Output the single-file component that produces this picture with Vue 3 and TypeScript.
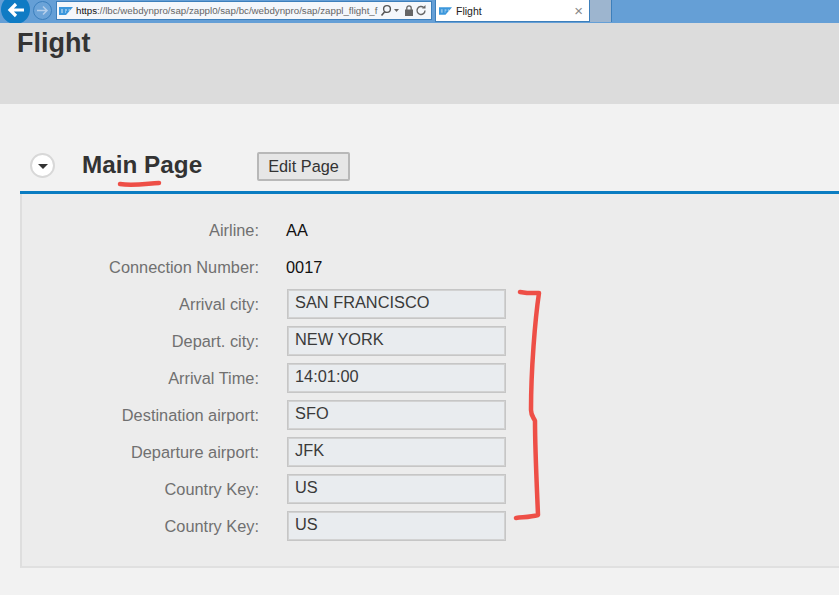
<script setup lang="ts">
interface Row { label: string; value: string; input: boolean }
const rows: Row[] = [
  { label: 'Airline:', value: 'AA', input: false },
  { label: 'Connection Number:', value: '0017', input: false },
  { label: 'Arrival city:', value: 'SAN FRANCISCO', input: true },
  { label: 'Depart. city:', value: 'NEW YORK', input: true },
  { label: 'Arrival Time:', value: '14:01:00', input: true },
  { label: 'Destination airport:', value: 'SFO', input: true },
  { label: 'Departure airport:', value: 'JFK', input: true },
  { label: 'Country Key:', value: 'US', input: true },
  { label: 'Country Key:', value: 'US', input: true },
]
</script>

<template>
  <div class="page">
    <div class="chrome">
      <div class="back">
        <svg width="20" height="18" viewBox="0 0 20 18"><path d="M18 9H4M10 3L4 9l6 6" fill="none" stroke="#fff" stroke-width="3.200"/></svg>
      </div>
      <div class="forward">
        <svg width="13" height="13" viewBox="0 0 13 13"><path d="M1 6.500h10M7 2.500l4 4-4 4" fill="none" stroke="#b5cfeb" stroke-width="1.500"/></svg>
      </div>
      <div class="address">
        <svg class="sap" width="14" height="8" viewBox="0 0 14 8">
          <path d="M0 0h14L7 8H0z" fill="#3b97dc"/>
          <path d="M2 3h2M2 5h2M6 3h2M6 5h1M9.500 3h1.500" stroke="#fff" stroke-width="0.800"/>
        </svg>
        <span class="url"><b>https</b>://lbc/webdynpro/sap/zappl0/sap/bc/webdynpro/sap/zappl_flight_f</span>
        <svg class="tool" width="48" height="13" viewBox="0 0 48 13">
          <circle cx="7" cy="5" r="3.400" fill="none" stroke="#555" stroke-width="1.400"/>
          <path d="M4.500 8L1.500 11.500" stroke="#555" stroke-width="1.600"/>
          <path d="M14 5h5l-2.500 3z" fill="#666"/>
          <rect x="25" y="5.500" width="8" height="6.500" fill="#666"/>
          <path d="M26.800 6V4a2.200 2.200 0 0 1 4.400 0v2" fill="none" stroke="#666" stroke-width="1.300"/>
          <path d="M45 6.500a4 4 0 1 1-1.300-3" fill="none" stroke="#666" stroke-width="1.400"/>
          <path d="M45.500 1v3.500H42z" fill="#666"/>
        </svg>
      </div>
      <div class="tab">
        <svg width="13" height="8" viewBox="0 0 14 8">
          <path d="M0 0h14L7 8H0z" fill="#3b97dc"/>
          <path d="M2 3h2M2 5h2M6 3h2M6 5h1M9.500 3h1.500" stroke="#fff" stroke-width="0.800"/>
        </svg>
        <span class="tabtitle">Flight</span>
        <span class="close">×</span>
      </div>
      <div class="newtab"></div>
    </div>

    <header class="head"><h1>Flight</h1></header>

    <main class="body">
      <div class="titlebar">
        <div class="toggle"><span class="arrow"></span></div>
        <h2>Main Page</h2>
        <button class="edit">Edit Page</button>
      </div>
      <section class="panel">
        <div v-for="(r, i) in rows" :key="i" class="row">
          <label>{{ r.label }}</label>
          <div v-if="r.input" class="field">{{ r.value }}</div>
          <div v-else class="plain">{{ r.value }}</div>
        </div>
      </section>
    </main>

    <svg class="ink" width="839" height="595" viewBox="0 0 839 595">
      <path d="M120 184c12 2 24 0 39-1" />
      <path d="M520 292L527 293L539 293C535 320 531 370 531 410C531 416 534 418 535 421C535 450 537 490 538 515C531 517 525 517 516 518" />
    </svg>
  </div>
</template>

<style>
html, body { margin: 0; padding: 0; background: #f2f2f2; }
</style>

<style scoped>
.page {
  position: relative;
  width: 839px;
  height: 595px;
  overflow: hidden;
  font-family: "Liberation Sans", Arial, sans-serif;
  background: #f2f2f2;
}
.chrome {
  height: 23px;
  overflow: hidden;
  background: #659fd6;
  display: flex;
  align-items: flex-start;
  box-sizing: border-box;
}
.back {
  width: 29px;
  height: 29px;
  margin: -5px 0 0 1px;
  background: #0f7bc4;
  border-radius: 50%;
  display: flex;
  align-items: center;
  justify-content: center;
  flex: none;
  padding-top: 0;
}
.forward {
  width: 19px;
  height: 19px;
  margin: 1px 0 0 3px;
  box-sizing: border-box;
  border: 1px solid #3b7fbd;
  border-radius: 50%;
  background: #6ba3d8;
  display: flex;
  align-items: center;
  justify-content: center;
  flex: none;
}
.address {
  width: 376px;
  height: 19px;
  margin: 1px 0 0 4px;
  padding: 0 3px 0 2px;
  box-sizing: border-box;
  background: #f4f7fb;
  border: 1px solid #3d7fbb;
  display: flex;
  align-items: center;
  font-size: 9.72px;
  color: #666;
  white-space: nowrap;
  flex: none;
}
.sap { flex: none; margin-right: 3px; }
.url { flex: 1; overflow: hidden; }
.url b { font-weight: 400; color: #111; }
.tool { flex: none; }
.tab {
  width: 155px;
  height: 22px;
  margin-left: 3px;
  padding: 0 6px 0 3px;
  box-sizing: border-box;
  background: #fff;
  border: 1px solid #3d7fbb;
  border-top: 0;
  display: flex;
  align-items: center;
  font-size: 10.5px;
  color: #222;
  flex: none;
}
.tabtitle { margin-left: 4px; flex: 1; }
.close { color: #888; font-size: 15px; line-height: 1; }
.newtab {
  width: 22px;
  height: 22px;
  box-sizing: border-box;
  background: #9db5cf;
  border-right: 1px solid #3d7fbb;
  flex: none;
}
.head {
  height: 81px;
  background: #dcdcdc;
  box-sizing: border-box;
  padding: 3px 0 0 17px;
}
h1 {
  margin: 0;
  font-size: 27px;
  line-height: 34px;
  font-weight: 700;
  color: #333;
}
.body { padding: 44px 0 0 20px; }
.titlebar {
  height: 46px;
  display: flex;
  align-items: flex-start;
  box-sizing: border-box;
  border-bottom: 3px solid #0a7cc1;
}
.toggle {
  width: 25px;
  height: 25px;
  margin: 5px 0 0 10px;
  border: 2px solid #d8d8d8;
  border-radius: 50%;
  background: #fff;
  box-sizing: border-box;
  display: flex;
  align-items: center;
  justify-content: center;
  flex: none;
}
.arrow {
  width: 0;
  height: 0;
  margin-top: 2px;
  border-left: 5px solid transparent;
  border-right: 5px solid transparent;
  border-top: 5px solid #333;
}
h2 {
  margin: 1px 0 0 27px;
  font-size: 24.3px;
  line-height: 32px;
  font-weight: 700;
  color: #333;
  width: 175px;
  flex: none;
}
.edit {
  width: 93px;
  height: 29px;
  margin-top: 4px;
  padding: 0;
  background: #e6e6e6;
  border: 2px solid #b8b8b8;
  border-radius: 2px;
  font-family: inherit;
  font-size: 16.3px;
  color: #333;
}
.panel {
  height: 374px;
  box-sizing: border-box;
  background: #ececec;
  border-left: 2px solid #dedede;
  border-bottom: 2px solid #e0e0e0;
  padding-top: 18px;
}
.row {
  height: 37px;
  display: flex;
  align-items: center;
  font-size: 16.35px;
}
label {
  width: 237px;
  text-align: right;
  color: #707070;
  flex: none;
}
.plain {
  margin-left: 27px;
  color: #111;
}
.field {
  width: 219px;
  height: 30px;
  margin: 0 0 1px 28px;
  padding-left: 7px;
  box-sizing: border-box;
  background: #e9ecef;
  border: 1px solid #c6c6c6;
  box-shadow: inset 0 0 0 1px #d2d2d2;
  color: #3a3a3a;
  line-height: 25px;
}
.ink {
  position: absolute;
  left: 0;
  top: 0;
  pointer-events: none;
}
.ink path {
  fill: none;
  stroke: #ee4f47;
  stroke-width: 4.500;
  stroke-linecap: round;
  stroke-linejoin: round;
}
</style>
